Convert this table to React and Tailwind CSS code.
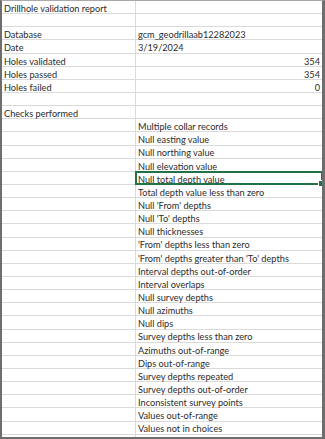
const rows = [
  { a: 'Drillhole validation report' },
  {},
  { a: 'Database', b: 'gcm_geodrillaab12282023' },
  { a: 'Date', b: '3/19/2024' },
  { a: 'Holes validated', b: '354', num: true },
  { a: 'Holes passed', b: '354', num: true },
  { a: 'Holes failed', b: '0', num: true },
  {},
  { a: 'Checks performed' },
  { b: 'Multiple collar records' },
  { b: 'Null easting value' },
  { b: 'Null northing value' },
  { b: 'Null elevation value' },
  { b: 'Null total depth value', selected: true },
  { b: 'Total depth value less than zero' },
  { b: "Null 'From' depths" },
  { b: "Null 'To' depths" },
  { b: 'Null thicknesses' },
  { b: "'From' depths less than zero" },
  { b: "'From' depths greater than 'To' depths" },
  { b: 'Interval depths out-of-order' },
  { b: 'Interval overlaps' },
  { b: 'Null survey depths' },
  { b: 'Null azimuths' },
  { b: 'Null dips' },
  { b: 'Survey depths less than zero' },
  { b: 'Azimuths out-of-range' },
  { b: 'Dips out-of-range' },
  { b: 'Survey depths repeated' },
  { b: 'Survey depths out-of-order' },
  { b: 'Inconsistent survey points' },
  { b: 'Values out-of-range' },
  { b: 'Values not in choices' },
  {},
];

function Cell({ children, right, selected, first }) {
  return (
    <div
      className={
        'relative h-[13.15px] box-border border-b border-[#dadada] flex items-end pb-[1px] px-[2px] leading-none whitespace-nowrap ' +
        (first ? 'border-r ' : '') +
        (right ? 'justify-end' : 'justify-start')
      }
    >
      <span className="translate-y-[1px]">{children}</span>
      {selected && (
        <>
          <div className="absolute -left-[1px] -top-[1px] -right-[1px] -bottom-[1px] border-2 border-[#217346] pointer-events-none" />
          <div className="absolute -right-[3px] -bottom-[3px] w-[5px] h-[5px] bg-[#217346] border border-white box-content" />
        </>
      )}
    </div>
  );
}

export default function App() {
  return (
    <div className="w-[325px] h-[439px] bg-white box-border border-l-2 border-t border-r-[3px] border-b-2 border-l-[#6e6e6e] border-t-[#a8a8a8] border-r-[#6e6e6e] border-b-[#6e6e6e] overflow-hidden">
      <div
        className="grid grid-cols-[134px_1fr] text-[9.2px] text-[#2b2b2b]"
        style={{ fontFamily: 'Lato, "Open Sans", sans-serif' }}
      >
        {rows.map((r, i) => (
          <div key={i} className="contents">
            <Cell first>{r.a}</Cell>
            <Cell right={r.num} selected={r.selected}>
              {r.b}
            </Cell>
          </div>
        ))}
      </div>
    </div>
  );
}
